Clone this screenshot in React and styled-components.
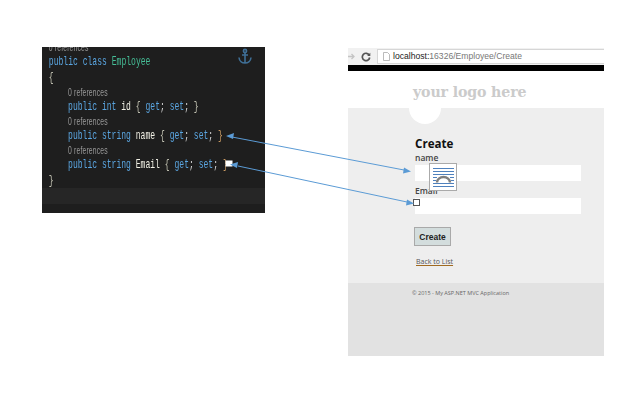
import React from "react";
import styled, { createGlobalStyle } from "styled-components";

const Global = createGlobalStyle`
  html, body { margin: 0; padding: 0; background: #fff; overflow: hidden; }
  #root { width: 626px; height: 412px; }
`;

const Canvas = styled.div`
  position: relative;
  width: 626px;
  height: 412px;
  display: flex;
  align-items: flex-start;
  gap: 83px;
  padding: 47px 0 0 42px;
  box-sizing: border-box;
  background: #fff;
  overflow: hidden;
`;

const CodePanel = styled.div`
  position: relative;
  flex: none;
  width: 223px;
  height: 166px;
  background: #1e1e1e;
  overflow: hidden;
`;

const CodeBlock = styled.div`
  position: relative;
  width: 360px;
  margin-top: -7px;
  transform: scaleX(0.62);
  transform-origin: left top;
  font: 13px/14.5px "Liberation Mono", monospace;
  color: #d8d8d8;
  filter: blur(0.25px);
`;

const Line = styled.div`
  height: 14.5px;
  padding-left: ${(p) => (p.$indent ? 42 : 11)}px;
  margin-top: ${(p) => p.$gap || 0}px;
  white-space: pre;
`;

const Refs = styled(Line)`
  font: 11px/14.5px "Liberation Sans", sans-serif;
  color: #9a9a9a;
  letter-spacing: 0.25px;
`;

const Kw = styled.span`color: #5aa5e0;`;
const Type = styled.span`color: #45bd96;`;
const Bright = styled.span`color: #f2f1e6;`;
const Brace = styled.span`color: #c4c4b4;`;
const Bracket = styled.span`color: #c99a62;`;

const Highlight = styled.div`
  position: absolute;
  left: 0;
  right: 0;
  top: 141px;
  height: 16px;
  background: #262626;
`;

const Anchor = styled.svg`
  position: absolute;
  left: 196px;
  top: 1px;
`;

const Browser = styled.div`
  flex: none;
  width: 256px;
  height: 308px;
  margin-top: 1px;
  display: flex;
  flex-direction: column;
  font-family: "Open Sans", "Liberation Sans", sans-serif;
  background: #fff;
`;

const Chrome = styled.div`
  flex: none;
  height: 17px;
  display: flex;
  align-items: center;
  gap: 4px;
  background: #f1f1f1;
`;

const NavIcons = styled.div`
  width: 25px;
  display: flex;
  align-items: center;
  gap: 6px;
`;

const Address = styled.div`
  flex: 1;
  height: 13px;
  display: flex;
  align-items: center;
  gap: 3px;
  padding-left: 5px;
  background: #fff;
  border: 1px solid #d6d6d6;
  border-right: 0;
  font: 8.6px/13px "Liberation Sans", sans-serif;
  color: #777;
`;

const Host = styled.span`color: #222;`;

const BlackBar = styled.div`
  flex: none;
  height: 6px;
  background: #000;
`;

const LogoBar = styled.div`
  position: relative;
  flex: none;
  height: 37px;
  padding: 11px 0 0 65px;
  box-sizing: border-box;
  background: #fff;
`;

const Logo = styled.div`
  position: relative;
  font: bold 14.2px/20px "DejaVu Serif", serif;
  color: #cbcbcb;
  letter-spacing: -0.15px;
  white-space: nowrap;
`;

const Notch = styled.div`
  position: absolute;
  left: 61px;
  top: 21px;
  width: 32px;
  height: 32px;
  border-radius: 50%;
  background: #fff;
`;

const Main = styled.div`
  flex: none;
  height: 175px;
  padding: 28px 23px 0 67px;
  box-sizing: border-box;
  background: #eeeeee;
`;

const Heading = styled.h2`
  margin: 0;
  font: bold 11.6px/16px "Open Sans", sans-serif;
  color: #111;
`;

const Label = styled.div`
  font: 600 8.5px/11px "Open Sans", sans-serif;
  color: #444;
  height: 13px;
`;

const Input = styled.div`
  height: 16px;
  background: #fff;
  margin-bottom: ${(p) => p.$mb || 0}px;
`;

const CreateButton = styled.button`
  display: block;
  width: 37px;
  height: 19px;
  margin: 13px 0 0 -1px;
  padding: 0;
  background: #d3dddd;
  border: 1px solid #a9a9a9;
  font: bold 8.5px/16px "Liberation Sans", sans-serif;
  color: #222;
`;

const BackLink = styled.a`
  display: inline-block;
  margin: 11px 0 0 1px;
  font: 7px/10px "Open Sans", sans-serif;
  color: #555;
  text-decoration: underline;
  text-decoration-color: #a06a20;
`;

const Footer = styled.div`
  flex: 1;
  padding: 6px 0 0 64px;
  background: #e2e2e2;
  font: 5.5px/8px "Open Sans", sans-serif;
  color: #666;
`;

const Overlay = styled.svg`
  position: absolute;
  left: 0;
  top: 0;
`;

const Member = ({ type, name, end }) => (
  <Line $indent>
    <Kw>public</Kw> <Kw>{type}</Kw> <Bright>{name}</Bright> <Brace>{"{"}</Brace> <Kw>get</Kw>; <Kw>set</Kw>;{" "}
    {end}
  </Line>
);

export default function App() {
  return (
    <>
      <Global />
      <Canvas>
        <CodePanel>
          <Highlight />
          <CodeBlock>
            <Refs>0 references</Refs>
            <Line>
              <Kw>public</Kw> <Kw>class</Kw> <Type>Employee</Type>
            </Line>
            <Line $gap={1.5}><Brace>{"{"}</Brace></Line>
            <Refs $indent>0 references</Refs>
            <Member type="int" name="id" end={<Brace>{"}"}</Brace>} />
            <Refs $indent>0 references</Refs>
            <Member type="string" name="name" end={<Bracket>{"}"}</Bracket>} />
            <Refs $indent>0 references</Refs>
            <Member type="string" name="Email" end={<Bracket>{"}"}</Bracket>} />
            <Line $gap={2}><Brace>{"}"}</Brace></Line>
          </CodeBlock>
          <Anchor width="14" height="17" viewBox="0 0 14 17" fill="none" stroke="#3f6f96" strokeWidth="1.6">
            <circle cx="7" cy="3" r="1.6" />
            <path d="M7 4.6V15M4 7h6M1 9.500c.3 3.500 3 5.500 6 5.500s5.700-2 6-5.500" />
          </Anchor>
        </CodePanel>

        <Browser>
          <Chrome>
            <NavIcons>
              <svg width="7" height="7" viewBox="0 0 7 7" fill="none" stroke="#c4c4c4" strokeWidth="1.300">
                <path d="M0 3.500h6M3.500 1L6 3.500 3.500 6" />
              </svg>
              <svg width="10" height="10" viewBox="0 0 10 10" fill="none" stroke="#555" strokeWidth="1.700">
                <path d="M8.300 3.200A3.700 3.700 0 1 0 8.700 5.500" />
                <path d="M9.300 0.800v3.200H6.100z" fill="#555" stroke="none" />
              </svg>
            </NavIcons>
            <Address>
              <svg width="7" height="9" viewBox="0 0 7 9" fill="#fff" stroke="#aaa" strokeWidth="0.800">
                <path d="M.5.500h4l2 2v6h-6z" />
              </svg>
              <span><Host>localhost:</Host>16326/Employee/Create</span>
            </Address>
          </Chrome>
          <BlackBar />
          <LogoBar>
            <Notch />
            <Logo>your logo here</Logo>
          </LogoBar>
          <Main>
            <Heading>Create</Heading>
            <Label>name</Label>
            <Input $mb={4} />
            <Label>Email</Label>
            <Input />
            <CreateButton>Create</CreateButton>
            <BackLink>Back to List</BackLink>
          </Main>
          <Footer>© 2015 - My ASP.NET MVC Application</Footer>
        </Browser>

        <Overlay width="626" height="412" viewBox="0 0 626 412">
          <rect x="225.500" y="160.500" width="7" height="6" fill="#fff" />
          <rect x="413.500" y="199.500" width="6" height="6" fill="#fff" stroke="#555" strokeWidth="1" />
          <g stroke="#5b9bd5" strokeWidth="1" fill="#5b9bd5">
            <path d="M232 137L404 170" />
            <path d="M226 136l8-3-1 6zM411 171.500l-8 2 1-6z" stroke="none" />
            <path d="M238 166L407 202" />
            <path d="M230 164.500l8-2.500-1 6zM414 203.500l-8 2 1-6z" stroke="none" />
          </g>
          <rect x="429.500" y="163.500" width="27" height="27" fill="#fff" stroke="#aaa" />
          <g stroke="#4f81bd" strokeWidth="1">
            <path d="M433 168.500h21M433 171.500h21M433 174.500h21" />
            <path d="M433 177.500h4M450 177.500h4M433 180.500h3M451 180.500h3M433 183.500h21M433 186.500h21" />
          </g>
          <path d="M437 182.500a6.500 5.500 0 0 1 13 0" fill="none" stroke="#7f7f7f" strokeWidth="2.500" />
        </Overlay>
      </Canvas>
    </>
  );
}
